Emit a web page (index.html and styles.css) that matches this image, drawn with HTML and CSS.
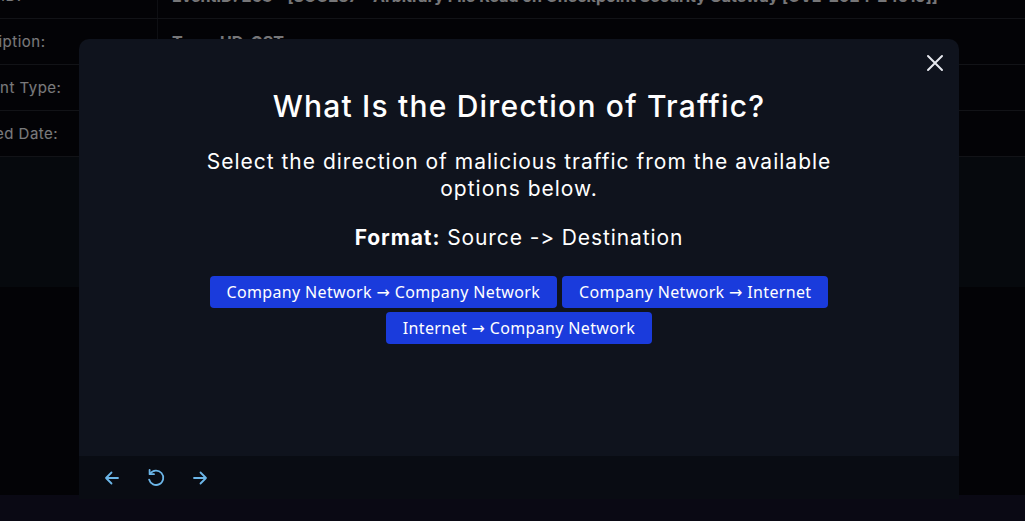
FILE: index.html
```html
<!DOCTYPE html>
<html lang="en">
<head>
<meta charset="utf-8">
<title>Direction of Traffic</title>
<link rel="stylesheet" href="styles.css">
</head>
<body>
<main class="page">
  <div class="details">
    <div class="row">
      <div class="label">Event ID:</div>
      <div class="value">EventID: 263 - [SOC287 - Arbitrary File Read on Checkpoint Security Gateway [CVE-2024-24919]]</div>
    </div>
    <div class="row">
      <div class="label">Description:</div>
      <div class="value">Type: UD-GST</div>
    </div>
    <div class="row">
      <div class="label">Incident Type:</div>
      <div class="value">Web Attack</div>
    </div>
    <div class="row">
      <div class="label">Created Date:</div>
      <div class="value">Jun, 06, 2024, 03:12 PM</div>
    </div>
    <div class="panel"></div>
  </div>
</main>
<div class="band"></div>
<div class="overlay"></div>
<section class="modal" role="dialog" aria-labelledby="q-title">
  <button class="close" aria-label="Close">
    <svg width="18" height="18" viewBox="0 0 18 18"><path d="M2 2 L16 16 M16 2 L2 16" stroke="#e6e8ee" stroke-width="2" stroke-linecap="round"/></svg>
  </button>
  <div class="modal-body">
    <h1 id="q-title" class="title">What Is the Direction of Traffic?</h1>
    <p class="subtitle">Select the direction of malicious traffic from the available<br>options below.</p>
    <p class="format"><strong>Format:</strong> Source -&gt; Destination</p>
    <div class="options">
      <button class="option">Company Network → Company Network</button>
      <button class="option">Company Network → Internet</button>
      <button class="option">Internet → Company Network</button>
    </div>
  </div>
  <footer class="modal-footer">
    <button class="nav" aria-label="Back">
      <svg width="20" height="20" viewBox="0 0 20 20"><path d="M16 10 H4 M9.5 4.5 L4 10 L9.5 15.5" fill="none" stroke="#6cb6e8" stroke-width="1.8" stroke-linecap="round" stroke-linejoin="round"/></svg>
    </button>
    <button class="nav" aria-label="Restart">
      <svg width="22" height="22" viewBox="0 0 22 22"><path d="M5.2 6.6 A7.2 7.2 0 1 1 4.1 12.6" fill="none" stroke="#6cb6e8" stroke-width="1.8" stroke-linecap="round"/><path d="M4.6 2.8 V7.2 H9" fill="none" stroke="#6cb6e8" stroke-width="1.8" stroke-linecap="round" stroke-linejoin="round"/></svg>
    </button>
    <button class="nav" aria-label="Next">
      <svg width="20" height="20" viewBox="0 0 20 20"><path d="M4 10 H16 M10.5 4.5 L16 10 L10.5 15.5" fill="none" stroke="#6cb6e8" stroke-width="1.8" stroke-linecap="round" stroke-linejoin="round"/></svg>
    </button>
  </footer>
</section>
</body>
</html>
```

FILE: styles.css
```css
* { box-sizing: border-box; }

html, body {
  margin: 0;
  padding: 0;
  height: 521px;
  overflow: hidden;
  background: #0a0914;
  font-family: Inter, "DejaVu Sans", sans-serif;
  font-variant-ligatures: none;
  font-feature-settings: "calt" 0;
}

.page {
  height: 495px;
  background: #07070d;
  overflow: hidden;
}

.details {
  margin-top: -27px;
}

.row {
  display: flex;
  height: 46px;
  border-bottom: 1px solid #24262f;
  align-items: center;
}

.label {
  flex: none;
  height: 100%;
  display: flex;
  align-items: center;
  margin-left: -46px;
  width: 204px;
  border-right: 1px solid #1c1e26;
  color: #f4f4f8;
  font-size: 15px;
  letter-spacing: 0.5px;
  white-space: nowrap;
}

.value {
  padding-left: 14px;
  color: #ededf0;
  font-size: 16px;
  font-weight: 700;
  white-space: nowrap;
}

.panel {
  height: 130px;
  background: #0d121b;
}

.band {
  height: 26px;
  background: #0a0914;
}

.overlay {
  position: fixed;
  left: 0;
  top: 0;
  right: 0;
  height: 495px;
  background: rgba(0, 0, 0, 0.5);
}

.modal {
  position: fixed;
  left: 79px;
  top: 39px;
  width: 880px;
  height: 460px;
  background: #0f131d;
  border-radius: 10px 10px 0 0;
  display: flex;
  flex-direction: column;
  color: #ffffff;
}

.close {
  position: absolute;
  top: 13px;
  right: 13px;
  width: 22px;
  height: 22px;
  padding: 2px;
  border: 0;
  background: none;
  display: flex;
  align-items: center;
  justify-content: center;
}

.modal-body {
  flex: 1;
  display: flex;
  flex-direction: column;
  align-items: center;
  padding-top: 49px;
}

.title {
  margin: 0;
  font-size: 30px;
  line-height: 36px;
  font-weight: 500;
  letter-spacing: 1.2px;
}

.subtitle {
  margin: 24px 0 0;
  font-size: 21px;
  line-height: 27px;
  letter-spacing: 1px;
  text-align: center;
}

.format {
  margin: 22px 0 0;
  font-size: 21px;
  line-height: 27px;
  letter-spacing: 0.9px;
}

.format strong {
  font-weight: 700;
}

.options {
  margin-top: 25px;
  width: 630px;
  display: flex;
  flex-wrap: wrap;
  justify-content: center;
  gap: 4px 5px;
}

.option {
  height: 32px;
  padding: 0 17px;
  border: 0;
  border-radius: 4px;
  background: #1a3bdc;
  color: #ffffff;
  font-family: "Noto Sans", "DejaVu Sans", sans-serif;
  font-size: 16px;
  letter-spacing: 0.35px;
}

.modal-footer {
  height: 43px;
  flex: none;
  background: #090c13;
  display: flex;
  align-items: center;
  padding-left: 22px;
  gap: 22px;
}

.nav {
  border: 0;
  background: none;
  padding: 0;
  width: 22px;
  height: 22px;
  display: flex;
  align-items: center;
  justify-content: center;
}
```
